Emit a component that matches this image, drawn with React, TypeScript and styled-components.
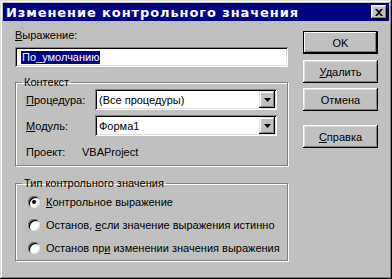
import React from 'react';
import styled, { createGlobalStyle } from 'styled-components';

const GlobalStyle = createGlobalStyle`
    html, body {
        margin: 0;
        padding: 0;
        background: #c0c0c0;
    }
    * {
        box-sizing: border-box;
    }
`;

const Window = styled.div`
    width: 392px;
    height: 279px;
    background: #c0c0c0;
    padding: 3px;
    display: flex;
    flex-direction: column;
    font-family: "Liberation Sans", Arial, sans-serif;
    font-size: 11px;
    color: #000;
    box-shadow: inset -1px -1px #000, inset 1px 1px #dfdfdf, inset -2px -2px #808080, inset 2px 2px #fff;
`;

const TitleBar = styled.div`
    height: 18px;
    background: #000080;
    color: #fff;
    display: flex;
    align-items: center;
    justify-content: space-between;
    padding: 0 2px 0 3px;
    font-family: "DejaVu Sans", "Liberation Sans", sans-serif;
    font-weight: bold;
    font-size: 13px;
    letter-spacing: 0.9px;
    white-space: nowrap;
`;

const CloseButton = styled.div`
    width: 16px;
    height: 14px;
    background: #c0c0c0;
    display: flex;
    align-items: center;
    justify-content: center;
    box-shadow: inset -1px -1px #000, inset 1px 1px #fff, inset -2px -2px #808080, inset 2px 2px #dfdfdf;
`;

const Body = styled.div`
    flex: 1;
    display: flex;
    gap: 15px;
    padding: 8px 0 0 12px;
`;

const LeftColumn = styled.div`
    width: 273px;
    display: flex;
    flex-direction: column;
`;

const FieldLabel = styled.div`
    height: 13px;
    line-height: 13px;
    margin-bottom: 5px;
`;

const Sunken = styled.div<{ $height: number }>`
    height: ${p => p.$height}px;
    background: #fff;
    display: flex;
    align-items: center;
    padding: 2px;
    box-shadow: inset 1px 1px #808080, inset -1px -1px #fff, inset 2px 2px #000, inset -2px -2px #dfdfdf;
`;

const Selected = styled.span`
    background: #000080;
    color: #fff;
    padding: 0 1px;
    margin-left: 4px;
    line-height: 13px;
`;

const Group = styled.fieldset<{ $height: number; $top: number }>`
    margin: ${p => p.$top}px 0 0 0;
    height: ${p => p.$height}px;
    padding: 0 4px 0 10px;
    border: 1px solid #808080;
    box-shadow: inset 1px 1px #fff, 1px 1px #fff;
    border-radius: 0;
    min-width: 0;
`;

const Legend = styled.legend`
    padding: 0 2px;
    margin-left: -4px;
    line-height: 13px;
`;

const FormRow = styled.div<{ $gap?: number }>`
    display: flex;
    align-items: center;
    margin-bottom: ${p => p.$gap ?? 5}px;
`;

const RowLabel = styled.div`
    width: 69px;
`;

const ComboText = styled.div`
    flex: 1;
    padding-left: 2px;
`;

const ComboButton = styled.div`
    width: 16px;
    height: 17px;
    background: #c0c0c0;
    display: flex;
    align-items: center;
    justify-content: center;
    box-shadow: inset -1px -1px #000, inset 1px 1px #dfdfdf, inset -2px -2px #808080, inset 2px 2px #fff;
`;

const Combo = styled(Sunken)`
    width: 182px;
`;

const ProjectValue = styled.div`
    margin-left: -13px;
`;

const RadioRow = styled.div`
    display: flex;
    align-items: center;
    gap: 6px;
    height: 23px;
    padding-left: 2px;
    white-space: nowrap;
`;

const RadioCircle = styled.span<{ $checked?: boolean }>`
    width: 12px;
    height: 12px;
    flex-shrink: 0;
    border-radius: 50%;
    background: #fff;
    display: inline-flex;
    align-items: center;
    justify-content: center;
    box-shadow: inset 1px 1px #808080, inset -1px -1px #dfdfdf, inset 2px 2px #000;

    &::after {
        content: '';
        width: 4px;
        height: 4px;
        border-radius: 50%;
        background: ${p => (p.$checked ? '#000' : 'transparent')};
    }
`;

const RightColumn = styled.div`
    display: flex;
    flex-direction: column;
    padding-top: 2px;
`;

const Button = styled.div<{ $default?: boolean; $gap: number }>`
    width: 75px;
    height: 23px;
    margin-bottom: ${p => p.$gap}px;
    display: flex;
    align-items: center;
    justify-content: center;
    background: #c0c0c0;
    box-shadow: ${p =>
        p.$default
            ? 'inset 0 0 0 1px #000, inset -2px -2px #000, inset 2px 2px #fff, inset -3px -3px #808080'
            : 'inset -1px -1px #000, inset 1px 1px #fff, inset -2px -2px #808080, inset 2px 2px #dfdfdf'};
`;

const Arrow = () => (
    <svg width="7" height="4" viewBox="0 0 7 4">
        <path d="M0 0h7L3.5 4z" fill="#000" />
    </svg>
);

export default function App() {
    return (
        <>
            <GlobalStyle />
            <Window>
                <TitleBar>
                    <span>Изменение контрольного значения</span>
                    <CloseButton>
                        <svg width="8" height="7" viewBox="0 0 8 7">
                            <path d="M0 0h2l2 2 2-2h2L5 3.5 8 7H6L4 5 2 7H0l3-3.5z" fill="#000" />
                        </svg>
                    </CloseButton>
                </TitleBar>
                <Body>
                    <LeftColumn>
                        <FieldLabel><u>В</u>ыражение:</FieldLabel>
                        <Sunken $height={20}>
                            <Selected>По_умолчанию</Selected>
                        </Sunken>

                        <Group $height={90} $top={9}>
                            <Legend>Контекст</Legend>
                            <FormRow>
                                <RowLabel><u>П</u>роцедура:</RowLabel>
                                <Combo $height={21}>
                                    <ComboText>(Все процедуры)</ComboText>
                                    <ComboButton><Arrow /></ComboButton>
                                </Combo>
                            </FormRow>
                            <FormRow $gap={10}>
                                <RowLabel><u>М</u>одуль:</RowLabel>
                                <Combo $height={21}>
                                    <ComboText>Форма1</ComboText>
                                    <ComboButton><Arrow /></ComboButton>
                                </Combo>
                            </FormRow>
                            <FormRow>
                                <RowLabel>Проект:</RowLabel>
                                <ProjectValue>VBAProject</ProjectValue>
                            </FormRow>
                        </Group>

                        <Group $height={84} $top={11}>
                            <Legend>Тип контрольного значения</Legend>
                            <RadioRow>
                                <RadioCircle $checked />
                                <span><u>К</u>онтрольное выражение</span>
                            </RadioRow>
                            <RadioRow>
                                <RadioCircle />
                                <span>Останов, <u>е</u>сли значение выражения истинно</span>
                            </RadioRow>
                            <RadioRow>
                                <RadioCircle />
                                <span>Останов пр<u>и</u> изменении значения выражения</span>
                            </RadioRow>
                        </Group>
                    </LeftColumn>
                    <RightColumn>
                        <Button $default $gap={6}>OK</Button>
                        <Button $gap={5}><span><u>У</u>далить</span></Button>
                        <Button $gap={14}>Отмена</Button>
                        <Button $gap={0}><span><u>С</u>правка</span></Button>
                    </RightColumn>
                </Body>
            </Window>
        </>
    );
}
